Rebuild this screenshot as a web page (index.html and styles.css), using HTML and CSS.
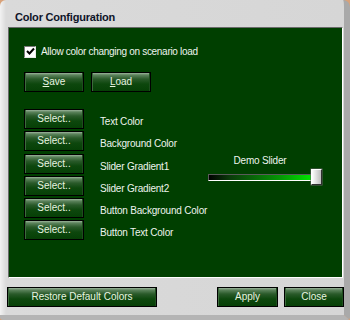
FILE: index.html
```html
<!DOCTYPE html>
<html>
<head>
<meta charset="utf-8">
<link rel="stylesheet" href="styles.css">
</head>
<body>
<div class="window">
  <div class="title">Color Configuration</div>
  <div class="panel">
    <div class="check-row">
      <span class="checkbox"><svg width="9" height="9" viewBox="0 0 9 9"><path d="M1 4 L3.5 6.5 L8 1.5" fill="none" stroke="#000" stroke-width="2"/></svg></span>
      <span class="check-label">Allow color changing on scenario load</span>
    </div>
    <div class="file-row">
      <button class="btn btn-small"><u>S</u>ave</button>
      <button class="btn btn-small"><u>L</u>oad</button>
    </div>
    <div class="main-row">
      <div class="color-grid">
        <button class="btn btn-select">Select..</button><span class="color-label">Text Color</span>
        <button class="btn btn-select">Select..</button><span class="color-label">Background Color</span>
        <button class="btn btn-select">Select..</button><span class="color-label">Slider Gradient1</span>
        <button class="btn btn-select">Select..</button><span class="color-label">Slider Gradient2</span>
        <button class="btn btn-select">Select..</button><span class="color-label">Button Background Color</span>
        <button class="btn btn-select">Select..</button><span class="color-label">Button Text Color</span>
      </div>
      <div class="slider-box">
        <div class="slider-label">Demo Slider</div>
        <div class="slider">
          <div class="track"></div>
          <div class="thumb"></div>
        </div>
      </div>
    </div>
  </div>
  <div class="footer">
    <button class="btn btn-restore">Restore Default Colors</button>
    <div class="footer-right">
      <button class="btn btn-apply">Apply</button>
      <button class="btn btn-close">Close</button>
    </div>
  </div>
</div>
</body>
</html>
```
FILE: styles.css
```css
html {
  background: #d8a27a;
}
body {
  margin: 0;
  width: 350px;
  height: 320px;
  font-family: "Liberation Sans", Arial, sans-serif;
}
.window {
  box-sizing: border-box;
  width: 350px;
  height: 320px;
  background: linear-gradient(to right, #f2f2f2 0, #dadada 6px, #d6d6d6 100%);
  border-right: 6px solid #a9a9a9;
  border-bottom: 5px solid #b4b4b4;
  border-radius: 6px 7px 3px 3px;
  display: flex;
  flex-direction: column;
}
.title {
  height: 27px;
  box-sizing: border-box;
  padding: 11px 0 0 15px;
  font-size: 11px;
  font-weight: bold;
  letter-spacing: -0.2px;
  color: #0e1428;
  line-height: 12px;
}
.panel {
  box-sizing: border-box;
  margin-left: 8px;
  width: 335px;
  height: 251px;
  background: #003f00;
  border-top: 1px solid #6a6a6a;
  border-left: 1px solid #6a6a6a;
  border-right: 1px solid #ffffff;
  border-bottom: 1px solid #ffffff;
  padding-left: 15px;
  color: #e8f2e8;
}
.check-row {
  display: flex;
  align-items: center;
  gap: 5px;
  margin-top: 17px;
  height: 13px;
}
.checkbox {
  box-sizing: border-box;
  width: 12px;
  height: 12px;
  background: #fff;
  border-top: 1px solid #7a7a7a;
  border-left: 1px solid #7a7a7a;
  border-right: 1px solid #e8e8e8;
  border-bottom: 1px solid #e8e8e8;
  display: flex;
  align-items: center;
  justify-content: center;
}
.check-label {
  font-size: 10px;
  letter-spacing: -0.3px;
  color: #eef4ee;
}
.btn {
  box-sizing: border-box;
  height: 20px;
  padding: 0;
  margin: 0;
  border: 1px solid #000;
  background: linear-gradient(to bottom, #9cb49c 0, #5c835c 2px, #2a5a2a 6px, #0d470d 11px, #064006 100%);
  color: #e8f4e0;
  font-family: "Liberation Sans", Arial, sans-serif;
  font-size: 10px;
  line-height: 18px;
  text-align: center;
  box-shadow: inset 1px 0 0 #3d6a3d, inset -1px 0 0 #1e4e1e;
}
.file-row {
  display: flex;
  gap: 7px;
  margin-top: 14px;
}
.btn-small {
  width: 60px;
}
.main-row {
  display: flex;
  margin-top: 17px;
}
.color-grid {
  display: grid;
  grid-template-columns: 60px auto;
  grid-auto-rows: 20px;
  row-gap: 2.3px;
  column-gap: 16px;
  width: 184px;
}
.btn-select {
  width: 60px;
}
.color-label {
  font-size: 10px;
  letter-spacing: -0.2px;
  line-height: 12px;
  padding-top: 7px;
  white-space: nowrap;
  color: #eef4ee;
}
.slider-box {
  margin-top: 46px;
  width: 115px;
}
.slider-label {
  width: 104px;
  text-align: center;
  font-size: 10px;
  letter-spacing: -0.2px;
  line-height: 12px;
  color: #eef4ee;
  margin-bottom: 2px;
}
.slider {
  position: relative;
  height: 16px;
  display: flex;
  align-items: center;
}
.track {
  box-sizing: border-box;
  width: 105px;
  height: 7px;
  background: linear-gradient(to right, #000 0, #0a3a0a 20%, #059a05 70%, #00e400 100%);
  border-top: 1px solid #5a5a5a;
  border-left: 1px solid #5a5a5a;
  border-right: 1px solid #fff;
  border-bottom: 1px solid #fff;
}
.thumb {
  position: absolute;
  left: 103px;
  top: 0;
  box-sizing: border-box;
  width: 11px;
  height: 16px;
  background: linear-gradient(to right, #ffffff 0, #e4e4e4 40%, #bdbdbd 100%);
  border-top: 1px solid #fff;
  border-left: 1px solid #fff;
  border-right: 1px solid #303030;
  border-bottom: 1px solid #303030;
  box-shadow: 0 0 0 0.5px #606060;
}
.footer {
  display: flex;
  justify-content: space-between;
  margin-top: 9px;
  padding-left: 7px;
}
.btn-restore {
  width: 150px;
}
.footer-right {
  display: flex;
  gap: 6px;
}
.btn-apply {
  width: 61px;
}
.btn-close {
  width: 60px;
}
```
